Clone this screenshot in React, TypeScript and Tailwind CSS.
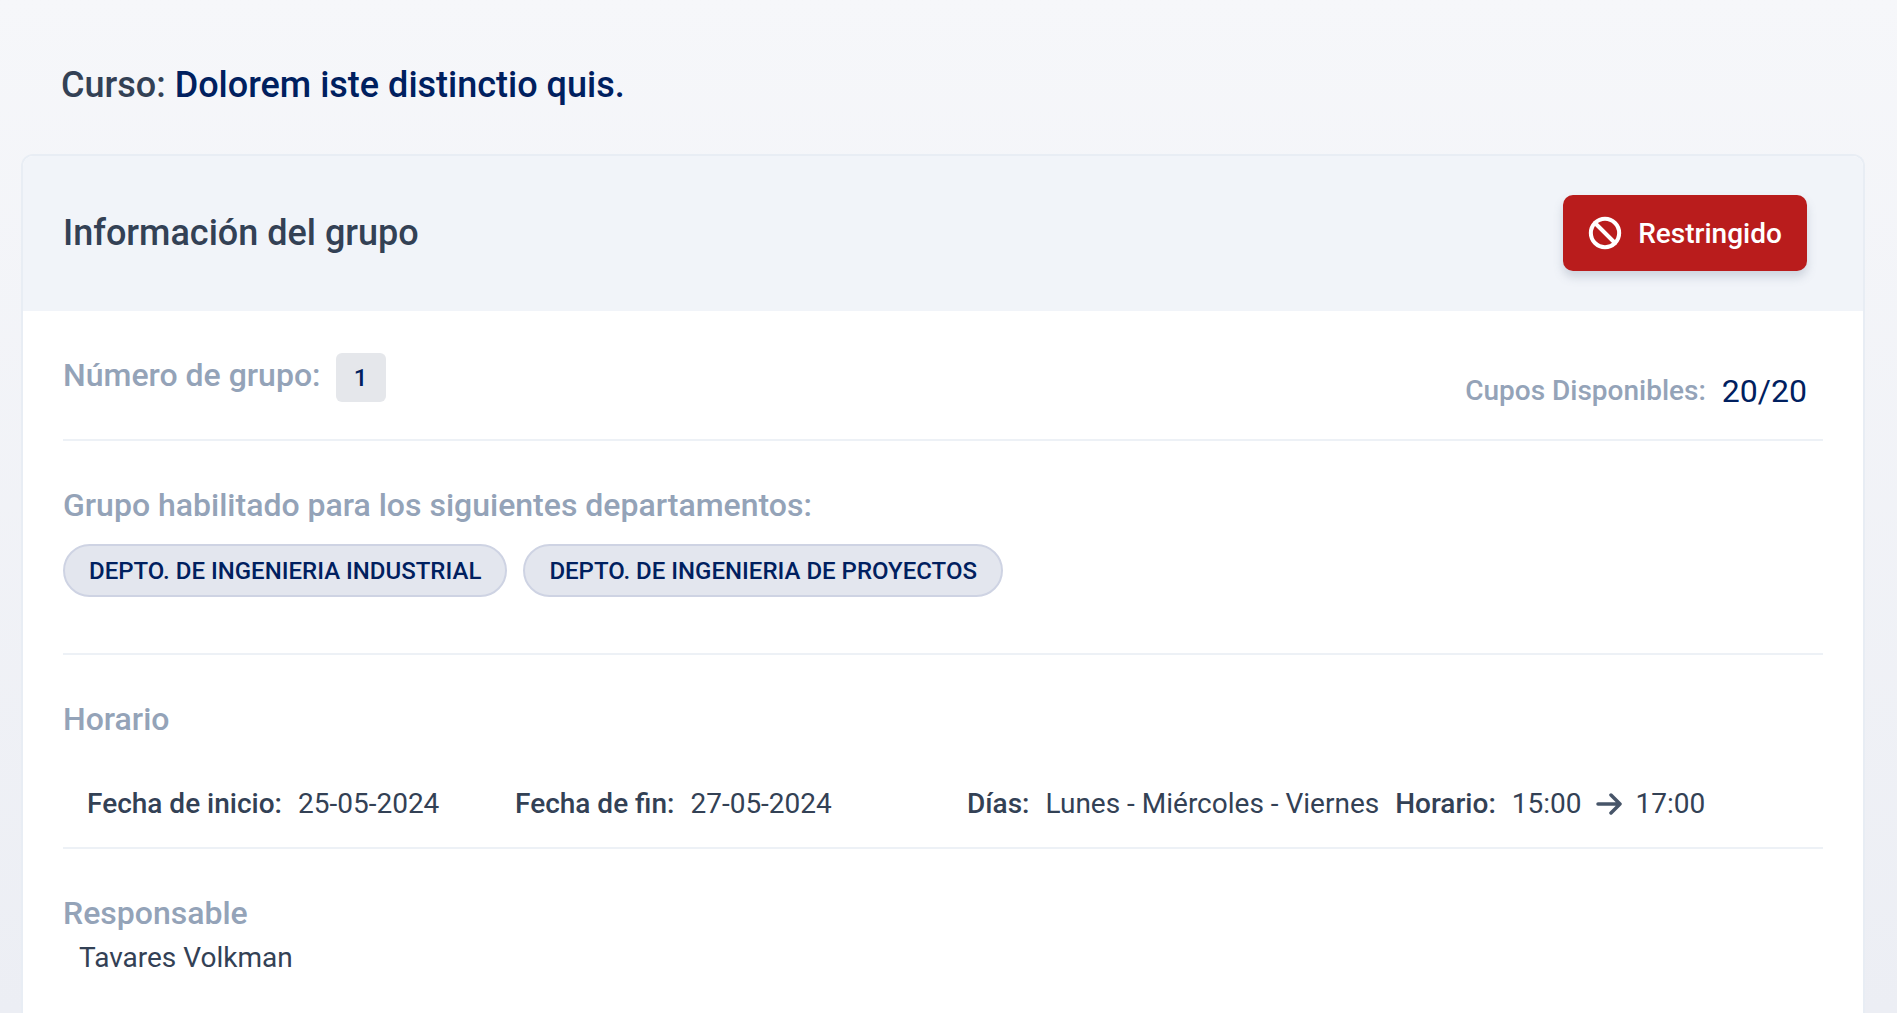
import { Ban } from "lucide-react";

function Divider() {
  return <hr className="border-0 h-[2px] bg-[#edf1f6]" />;
}

function Field({ label, value }: { label: string; value: string }) {
  return (
    <span className="flex items-center gap-4">
      <span className="font-medium">{label}</span>
      <span>{value}</span>
    </span>
  );
}

export default function App() {
  return (
    <div className="h-[1013px] overflow-hidden bg-gradient-to-b from-[#f6f7fa] to-[#eceef4] text-[#334155] font-['Roboto',sans-serif]">
      {/* Course title */}
      <h1 className="h-[154px] pl-[61px] pt-[61px] text-[36px] leading-[48px] font-medium">
        Curso: <span className="text-[#00205f]">Dolorem iste distinctio quis.</span>
      </h1>

      <div className="ml-[21px] mr-[32px] h-[900px] rounded-t-[12px] overflow-hidden bg-white border-t-2 border-x-2 border-[#e8edf4]">
        {/* Header */}
        <div className="h-[155px] flex items-center justify-between pl-10 pr-14 pb-[2px] bg-[#f1f4f9]">
          <h2 className="text-[36px] font-medium">Información del grupo</h2>
          <button className="w-[244px] h-[76px] pt-[2px] flex items-center justify-center gap-4 rounded-[10px] bg-[#b91c1c] text-white text-[28px] font-medium shadow-[0_6px_10px_rgba(100,116,139,0.25)]">
            <Ban size={34} strokeWidth={2.85} className="-mt-[2px]" />
            Restringido
          </button>
        </div>

        <div className="px-10">
          {/* Group number and seats */}
          <div className="h-[128px] flex justify-between pr-4">
            <div className="flex items-start gap-[15px] pt-[42px]">
              <span className="text-[32px] leading-[44px] font-medium text-[#94a3b8]">Número de grupo:</span>
              <span className="w-[50px] h-[49px] flex items-center justify-center rounded-md bg-[#e5e7eb] text-[24px] font-medium text-[#00205f]">1</span>
            </div>
            <div className="flex items-center gap-4 pt-[32px]">
              <span className="text-[28px] font-medium text-[#94a3b8]">Cupos Disponibles:</span>
              <span className="text-[32px] text-[#00205f]">20/20</span>
            </div>
          </div>
          <Divider />

          {/* Departments */}
          <div className="h-[212px] pt-[42px]">
            <h3 className="text-[32px] leading-[44px] font-medium text-[#94a3b8]">Grupo habilitado para los siguientes departamentos:</h3>
            <div className="flex gap-4 mt-[17px]">
              <span className="h-[53px] px-6 flex items-center rounded-full bg-[#e3e6ee] border-2 border-[#ced3e3] text-[24px] font-medium text-[#00205f]">DEPTO. DE INGENIERIA INDUSTRIAL</span>
              <span className="h-[53px] px-6 flex items-center rounded-full bg-[#e3e6ee] border-2 border-[#ced3e3] text-[24px] font-medium text-[#00205f]">DEPTO. DE INGENIERIA DE PROYECTOS</span>
            </div>
          </div>
          <Divider />

          {/* Schedule */}
          <div className="h-[192px] pt-[42px]">
            <h3 className="text-[32px] leading-[44px] font-medium text-[#94a3b8]">Horario</h3>
            <div className="flex items-center mt-[43px] pl-6 text-[28px] leading-[40px]">
              <div className="w-[428px]"><Field label="Fecha de inicio:" value="25-05-2024" /></div>
              <div className="w-[452px]"><Field label="Fecha de fin:" value="27-05-2024" /></div>
              <div className="flex items-center gap-4">
                <Field label="Días:" value="Lunes - Miércoles - Viernes" />
                <span className="flex items-center gap-[14px]">
                  <Field label="Horario:" value="15:00" />
                  <svg width="26" height="22" viewBox="0 0 26 22" fill="none" stroke="#475569" strokeWidth="3.5" strokeLinecap="round" strokeLinejoin="round">
                    <path d="M2 11h22M15 2l9 9-9 9" />
                  </svg>
                  <span>17:00</span>
                </span>
              </div>
            </div>
          </div>
          <Divider />

          {/* Owner */}
          <div className="pt-[42px]">
            <h3 className="text-[32px] leading-[44px] font-medium text-[#94a3b8]">Responsable</h3>
            <p className="pl-4 mt-px text-[28px] leading-[44px]">Tavares Volkman</p>
          </div>
        </div>
      </div>
    </div>
  );
}
